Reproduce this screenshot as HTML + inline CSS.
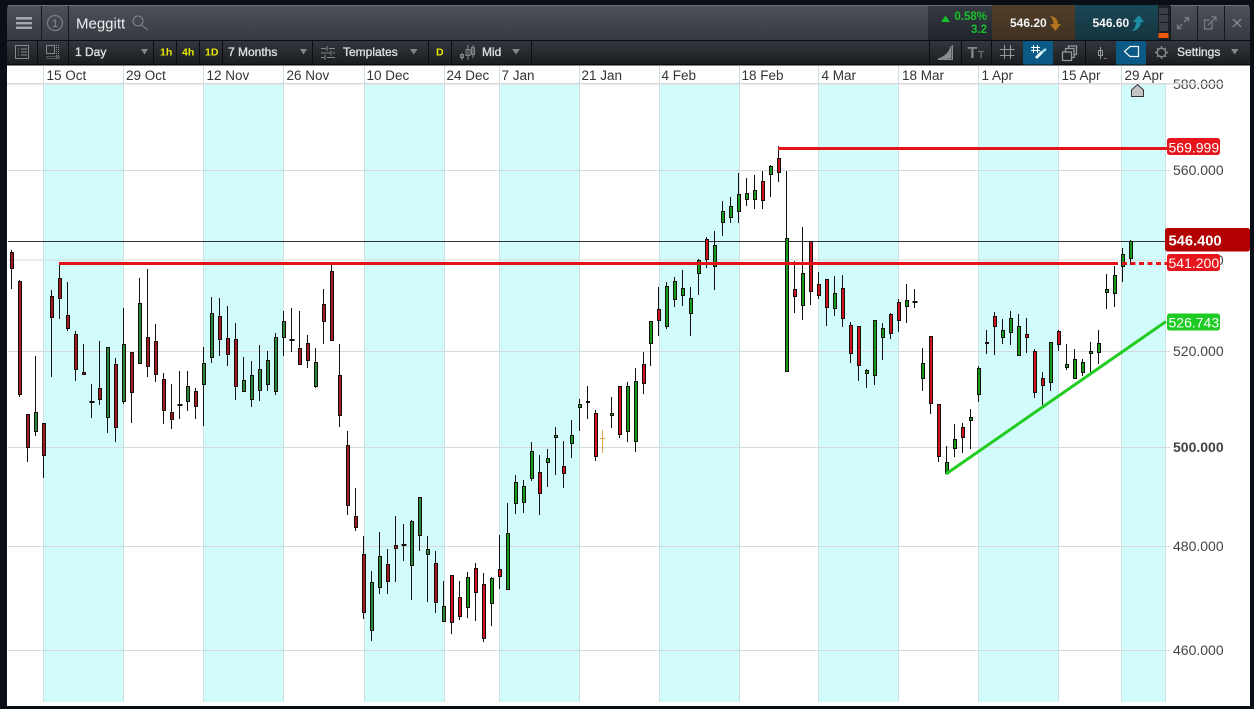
<!DOCTYPE html>
<html lang="en"><head><meta charset="utf-8"><title>Meggitt</title>
<style>
html,body{margin:0;padding:0;background:#0a0f16;width:1254px;height:709px;overflow:hidden}
svg{display:block;position:absolute;left:0;top:0}
text{font-family:"Liberation Sans",sans-serif}
.d{font-size:13.5px;fill:#333}
.a{font-size:14px;fill:#444}
.t{font-size:12px;fill:#dcdee2;stroke:#dcdee2;stroke-width:.35px}
.y{font-size:10.5px;font-weight:bold;fill:#e8e800}
.l{font-size:14px;fill:#fff}
.s{stroke:#15100f;stroke-width:1}
.i{fill:none;stroke:#85888d;stroke-width:1}
</style></head><body>
<svg width="1254" height="709" viewBox="0 0 1254 709" xmlns="http://www.w3.org/2000/svg">
<defs>
<linearGradient id="g1" x1="0" y1="0" x2="0" y2="1"><stop offset="0" stop-color="#4d5159"/><stop offset="1" stop-color="#25282e"/></linearGradient>
<linearGradient id="g2" x1="0" y1="0" x2="0" y2="1"><stop offset="0" stop-color="#33363c"/><stop offset="1" stop-color="#1a1c21"/></linearGradient>
<linearGradient id="g3" x1="0" y1="0" x2="0" y2="1"><stop offset="0" stop-color="#353942"/><stop offset="1" stop-color="#22252c"/></linearGradient>
<linearGradient id="g4" x1="0" y1="0" x2="0" y2="1"><stop offset="0" stop-color="#523f29"/><stop offset="1" stop-color="#403122"/></linearGradient>
<linearGradient id="g5" x1="0" y1="0" x2="0" y2="1"><stop offset="0" stop-color="#1a4655"/><stop offset="1" stop-color="#153540"/></linearGradient>
</defs>
<rect width="1254" height="709" fill="#0a0f16"/>
<!-- title bar -->
<rect x="7" y="5" width="1243" height="60" rx="4" fill="url(#g1)"/>
<rect x="8" y="5" width="1241" height="1" fill="#6c6f75"/>
<rect x="7" y="40" width="1243" height="1" fill="#0c0d10"/>
<rect x="7" y="41" width="1243" height="24" fill="url(#g2)"/>
<rect x="7" y="64" width="1243" height="1.5" fill="#08090b"/>
<g fill="#a5a8ac"><rect x="16" y="17" width="16" height="2.6"/><rect x="16" y="22" width="16" height="2.4"/><rect x="16" y="26.6" width="16" height="2.4"/></g>
<path d="M41.5 6V40M68.5 6V40" stroke="#17181c"/>
<circle cx="55" cy="23" r="7.5" fill="none" stroke="#7c7f84" stroke-width="1.2"/>
<text x="55" y="27" text-anchor="middle" font-size="11" fill="#8a8d92">1</text>
<text x="76" y="28.5" font-size="15" fill="#eceef0">Meggitt</text>
<circle cx="138" cy="21" r="5" class="i" stroke-width="1.2"/><path d="M141.5 25L148 30" class="i" stroke-width="1.4"/>
<!-- quote -->
<rect x="928" y="6" width="64" height="34" fill="url(#g3)"/>
<rect x="992" y="5" width="83" height="35" fill="url(#g4)"/>
<rect x="1075" y="5" width="83" height="35" fill="url(#g5)"/>
<rect x="1158" y="5" width="12" height="35" fill="#1d2024"/>
<g fill="#3a3e44"><rect x="1159" y="8" width="9" height="6"/><rect x="1159" y="15" width="9" height="7"/><rect x="1159" y="23" width="9" height="8"/></g>
<rect x="1158.5" y="33" width="10" height="5" fill="#f05a10"/>
<path d="M1170.5 6V40M1197.5 6V40M1224.5 6V40" stroke="#17181c"/>
<path d="M945.5 15.5L950 22H941Z" fill="#18c02c"/>
<text x="987" y="20" text-anchor="end" font-size="11.5" font-weight="bold" fill="#18c02c">0.58%</text>
<text x="987" y="33" text-anchor="end" font-size="11.5" font-weight="bold" fill="#18c02c">3.2</text>
<text x="1010" y="27" font-size="12" font-weight="bold" fill="#f4f4f4">546.20</text>
<path d="M1050 16C1054 16 1058 19 1058 24L1061 24L1055.5 31L1050 24.5L1053.5 24C1053.5 21 1052 18 1050 16Z" fill="#b0731e"/>
<text x="1092.5" y="27" font-size="12" font-weight="bold" fill="#f4f4f4">546.60</text>
<path d="M1132 31C1135 28 1136 25 1136 22L1133 22L1139 15L1144 22L1141 22C1141 26 1137 31 1132 31Z" fill="#1c8ea2"/>
<path d="M1177.5 28.5L1182 24M1177.5 24.5V28.5H1181.5M1188.5 17.5L1184 22M1184.5 17.5H1188.5V21.5" fill="none" stroke="#7a7d82" stroke-width="1.3"/>
<path d="M1212 20.5V29H1204.5V20H1210M1208 25L1216 17M1211.5 17H1216V21.5" fill="none" stroke="#7a7d82" stroke-width="1.2"/>
<path d="M1233 19L1241 27M1241 19L1233 27" stroke="#85888d" stroke-width="1.4"/>
<!-- toolbar -->
<path d="M37.5 41V64M68.5 41V64M153.5 41V64M176.5 41V64M199.5 41V64M222.5 41V64M312.5 41V64M428.5 41V64M451.5 41V64M531.5 41V64M929.5 41V64M961.5 41V64M991.5 41V64M1085.5 41V64" stroke="#0d0e11"/>
<rect x="15.5" y="45.5" width="13" height="13" class="i"/><path d="M18 49h1M21 49h6M18 52h1M21 52h6M18 55h1M21 55h6" class="i"/>
<rect x="46.5" y="45.5" width="8" height="8" class="i"/><path d="M46.5 56.5H60M46.5 58.5H60M56.5 45V59M58.5 45V59" class="i" stroke-dasharray="1 1"/>
<text x="75" y="56" class="t">1 Day</text>
<path d="M141 49H148L144.500 54.500Z" fill="#82858a"/>
<text x="160" y="55.500" class="y">1h</text><text x="182" y="55.500" class="y">4h</text><text x="205" y="55.500" class="y">1D</text>
<text x="228" y="56" class="t">7 Months</text>
<path d="M300 49H307L303.500 54.500Z" fill="#82858a"/>
<path d="M321 48.500H326M329 48.500H335M321 53H330M333 53H335M321 57.500H324M327 57.500H335M327 46V51M331 50.500V55.500M325 55V60" class="i"/>
<text x="343" y="56" class="t">Templates</text>
<path d="M410 49H417.500L413.700 54.500Z" fill="#82858a"/>
<text x="436" y="55.500" class="y">D</text>
<path d="M462 53V60M468 45V60M473 45V58" class="i" stroke="#777"/><rect x="460.500" y="54.500" width="3" height="3" class="i" fill="#25272c"/><rect x="466" y="49.500" width="4" height="6" class="i" fill="#25272c"/><rect x="471.500" y="47.500" width="3" height="7" class="i" fill="#25272c"/>
<text x="482" y="56" class="t">Mid</text>
<path d="M512 49H520L516 54.500Z" fill="#82858a"/>
<path d="M938 59.500H952.500V45M938 59C945 57 950 52 951 46V58Z" fill="none" stroke="#8a8d92"/><path d="M940 58C946 56 949 52 951 47V58Z" fill="#8a8d92"/>
<text x="967.500" y="58" font-size="16" fill="#85888d" font-weight="bold">T</text><text x="978" y="58" font-size="10" fill="#85888d">T</text>
<path d="M1004.500 45V59M1010.500 45V59M1000 49.500H1014.500M1000 55.500H1014.500" stroke="#95989c" fill="none"/>
<rect x="1023" y="41" width="30" height="23.500" fill="#0b5a86"/>
<path d="M1033.500 45V53M1037.500 45V53M1031 47.500H1040M1031 50.500H1040" stroke="#fff" fill="none"/>
<path d="M1036 58L1042 52" stroke="#e8f4f8" stroke-width="3"/><path d="M1042 52L1046 49" stroke="#9fd8e8" stroke-width="2.500"/>
<path d="M1062.500 50.500H1071.500V59H1062.500ZM1065.500 50V47H1074V56H1072M1068.500 47V44.500H1076.500V53H1074" fill="none" stroke="#95989c" stroke-width="1.300" transform="translate(0,1.500)"/>
<path d="M1100.500 47V59" stroke="#95989c"/><rect x="1098.500" y="50.500" width="4" height="5" fill="none" stroke="#95989c"/><path d="M1104 58.500H1107" stroke="#777"/>
<rect x="1116" y="41" width="30" height="23.500" fill="#0b5a86"/>
<path d="M1124.500 51.500L1130 46.500H1138.500V56.500H1130Z" fill="none" stroke="#f2f6f8" stroke-width="1.200"/>
<circle cx="1161.500" cy="52.500" r="4.300" fill="none" stroke="#85888d" stroke-width="1.500"/><path d="M1161.500 46V48.500M1161.500 56.500V59M1155 52.500H1157.500M1165.500 52.500H1168M1157 48L1158.500 49.500M1164.500 55.500L1166 57M1166 48L1164.500 49.500M1158.500 55.500L1157 57" stroke="#85888d" stroke-width="1.400"/>
<text x="1177" y="56" class="t">Settings</text>
<path d="M1231 49H1238.500L1234.700 54.500Z" fill="#82858a"/>
<!-- chart -->
<rect x="7" y="65.500" width="1243" height="640.500" fill="#fff"/>
<g fill="#d2fbfc">
<rect x="43" y="84" width="80" height="618"/><rect x="203" y="84" width="80" height="618"/><rect x="364" y="84" width="80" height="618"/><rect x="499" y="84" width="80" height="618"/><rect x="659" y="84" width="80" height="618"/><rect x="818" y="84" width="80" height="618"/><rect x="978" y="84" width="80" height="618"/><rect x="1121" y="84" width="44" height="618"/>
</g>
<path d="M8 170.500H1170M8 260H1170M8 351.500H1170M8 447.500H1170M8 546.500H1170M8 650.500H1170" stroke="#d5d9da"/>
<path d="M43.500 66V702M123.500 66V702M203.500 66V702M283.500 66V702M364.500 66V702M444.500 66V702M499.500 66V702M579.500 66V702M659.500 66V702M739.500 66V702M818.500 66V702M898.500 66V702M978.500 66V702M1058.500 66V702M1121.500 66V702M1165.500 84V702" stroke="#cfe0e3"/>
<g>
<text class="d" x="46.500" y="80">15 Oct</text><text class="d" x="126" y="80">29 Oct</text><text class="d" x="206.500" y="80">12 Nov</text><text class="d" x="286.500" y="80">26 Nov</text><text class="d" x="366.500" y="80">10 Dec</text><text class="d" x="446.500" y="80">24 Dec</text><text class="d" x="501.500" y="80">7 Jan</text><text class="d" x="581.500" y="80">21 Jan</text><text class="d" x="661.500" y="80">4 Feb</text><text class="d" x="741.500" y="80">18 Feb</text><text class="d" x="821.500" y="80">4 Mar</text><text class="d" x="902" y="80">18 Mar</text><text class="d" x="981.500" y="80">1 Apr</text><text class="d" x="1061.500" y="80">15 Apr</text><text class="d" x="1124.500" y="80">29 Apr</text>
</g>
<text class="a" x="1173" y="89">580.000</text>
<rect x="7" y="83" width="1216" height="1.500" fill="#d9d9d9"/>
<text class="a" x="1173" y="175">560.000</text>
<text class="a" x="1173" y="265">540.000</text>
<text class="a" x="1173" y="356">520.000</text>
<text class="a" x="1173" y="452" font-weight="bold" fill="#222">500.000</text>
<text class="a" x="1173" y="551">480.000</text>
<text class="a" x="1173" y="655">460.000</text>
<path d="M1131.500 96.500V90L1137.500 84.500L1143.500 90V96.500Z" fill="#c4c4c4" stroke="#333"/>
<path d="M8 241.500H1166" stroke="#333"/>
<!-- wicks -->
<path fill="none" stroke="#15100f" d="M11.500 250V289M19.500 280V397M27.500 414V462M35.500 356V436M43.500 423V478M51.500 290V377M59.500 263V319M67.500 282V331M75.500 331V381M83.500 344V375M91.500 384V418M99.500 341V405M107.500 347V433M115.500 358V442M123.500 308V404M131.500 352V423M139.500 278V364M147.500 269V377M155.500 324V382M163.500 373V424M171.500 384V429M179.500 371V419M187.500 371V411M195.500 388V419M203.500 347V426M211.500 297V363M219.500 298V356M227.500 306V366M235.500 323V400M243.500 357V392M251.500 361V407M259.500 345V401M267.500 351V391M275.500 333V395M283.500 311V356M291.500 308V352M299.500 311V365M307.500 335V368M315.500 348V388M323.500 289V344M331.500 265V341M339.500 344V427M347.500 431V515M355.500 488V531M363.500 536V619M371.500 571V641M379.500 532V594M387.500 549V594M395.500 516V582M403.500 524V561M411.500 520V600M419.500 497V551M427.500 536V602M435.500 551V613M443.500 581V622M451.500 575V634M459.500 581V620M467.500 572V618M475.500 563V621M483.500 573V642M491.500 577V626M499.500 535V589M507.500 503V590M515.500 475V514M523.500 480V513M531.500 442V481M539.500 455V515M547.500 449V487M555.500 427V475M563.500 441V488M571.500 420V458M579.500 399V431M587.500 386V419M595.500 410V461M611.500 397V428M619.500 386V438M627.500 382V442M635.500 368V452M643.500 352V394M650.500 321V366M658.500 287V336M666.500 282V329M674.500 277V307M682.500 270V306M690.500 287V336M698.500 259V295M706.500 237V268M714.500 231V290M722.500 201V236M730.500 197V223M738.500 173V223M746.500 178V206M754.500 175V209M762.500 171V209M770.500 165V197M778.500 146V182M786.500 171V372M794.500 261V313M802.500 227V320M810.500 241V305M818.500 272V299M826.500 279V326M834.500 276V316M842.500 275V327M850.500 322V363M858.500 326V381M866.500 369V388M874.500 320V385M882.500 323V360M890.500 313V339M898.500 299V332M906.500 284V323M914.500 289V308M922.500 348V391M930.500 336V414M938.500 404V462M946.500 446V474M954.500 424V457M962.500 423V453M970.500 409V449M978.500 366V402M986.500 330V354M994.500 312V355M1002.500 319V344M1010.500 311V345M1018.500 314V356M1026.500 318V353M1034.500 349V398M1042.500 372V405M1050.500 342V391M1058.500 330V351M1066.500 344V370M1074.500 349V379M1082.500 359V376M1090.500 342V375M1098.500 330V364M1106.500 274V309M1114.500 266V307M1122.500 248V282M1130.500 240V265"/>
<path stroke="#15100f" stroke-width="2" d="M89.500 402H94.500M177.500 405H182.500M289.500 340H294.500M401.500 545H406.500M912.500 302H917.500"/>
<path stroke="#e0a445" fill="none" d="M602.500 430V453M600 438.500H605"/>
<!-- dark red bodies -->
<path class="s" fill="#a21a20" d="M10.500 252.500h3v16h-3zM18.500 281.500h3v113h-3zM26.500 414.500h3v33h-3zM42.500 423.500h3v32h-3zM50.500 296.500h3v21h-3zM58.500 278.500h3v20h-3zM66.500 315.500h3v13h-3zM74.500 334.500h3v35h-3zM82.500 372.500h3v2h-3zM98.500 388.500h3v11h-3zM114.500 364.500h3v63h-3zM130.500 352.500h3v40h-3zM146.500 337.500h3v29h-3zM154.500 341.500h3v33h-3zM162.500 379.500h3v31h-3zM170.500 412.500h3v7h-3zM194.500 391.500h3v15h-3zM218.500 316.500h3v23h-3zM226.500 338.500h3v16h-3zM234.500 339.500h3v47h-3zM298.500 348.500h3v16h-3zM306.500 343.500h3v17h-3zM322.500 304.500h3v17h-3zM330.500 271.500h3v69h-3zM338.500 375.500h3v40h-3zM346.500 445.500h3v60h-3zM354.500 516.500h3v11h-3zM362.500 554.500h3v58h-3zM386.500 564.500h3v17h-3zM394.500 545.500h3v3h-3zM434.500 563.500h3v39h-3z"/>
<!-- bright red bodies -->
<path class="s" fill="#d0121c" d="M450.500 575.500h3v47h-3zM458.500 597.500h3v19h-3zM474.500 568.500h3v24h-3zM482.500 584.500h3v54h-3zM498.500 569.500h3v7h-3zM538.500 472.500h3v21h-3zM562.500 466.500h3v7h-3zM594.500 413.500h3v43h-3zM618.500 386.500h3v48h-3zM642.500 364.500h3v19h-3zM657.500 309.500h3v11h-3zM705.500 239.500h3v20h-3zM761.500 181.500h3v19h-3zM777.500 158.500h3v14h-3zM793.500 289.500h3v7h-3zM809.500 241.500h3v50h-3zM817.500 284.500h3v11h-3zM825.500 279.500h3v28h-3zM841.500 288.500h3v30h-3zM849.500 325.500h3v28h-3zM857.500 326.500h3v39h-3zM889.500 314.500h3v19h-3zM897.500 302.500h3v18h-3zM929.500 336.500h3v67h-3zM937.500 404.500h3v52h-3zM961.500 427.500h3v10h-3zM993.500 316.500h3v10h-3zM1025.500 334.500h3v3h-3zM1033.500 351.500h3v41h-3zM1041.500 378.500h3v7h-3zM1057.500 331.500h3v13h-3z"/>
<!-- dark green bodies -->
<path class="s" fill="#2a8436" d="M34.500 412.500h3v19h-3zM106.500 347.500h3v70h-3zM122.500 344.500h3v57h-3zM138.500 303.500h3v60h-3zM186.500 386.500h3v15h-3zM202.500 363.500h3v21h-3zM210.500 313.500h3v44h-3zM242.500 380.500h3v11h-3zM250.500 375.500h3v24h-3zM258.500 369.500h3v21h-3zM266.500 360.500h3v24h-3zM274.500 337.500h3v54h-3zM282.500 321.500h3v16h-3zM314.500 362.500h3v24h-3zM370.500 582.500h3v48h-3zM378.500 556.500h3v31h-3zM410.500 521.500h3v44h-3zM418.500 497.500h3v38h-3zM426.500 549.500h3v5h-3zM442.500 606.500h3v15h-3z"/>
<!-- bright green bodies -->
<path class="s" fill="#149a18" d="M466.500 577.500h3v30h-3zM490.500 578.500h3v25h-3zM506.500 533.500h3v56h-3zM514.500 482.500h3v21h-3zM522.500 486.500h3v16h-3zM530.500 451.500h3v27h-3zM546.500 458.500h3v4h-3zM554.500 435.500h3v2h-3zM570.500 435.500h3v8h-3zM578.500 404.500h3v3h-3zM586.500 401.500h3v1h-3zM610.500 413.500h3v2h-3zM626.500 386.500h3v45h-3zM634.500 381.500h3v60h-3zM649.500 321.500h3v22h-3zM665.500 286.500h3v40h-3zM673.500 281.500h3v18h-3zM681.500 288.500h3v7h-3zM689.500 298.500h3v15h-3zM697.500 260.500h3v13h-3zM713.500 245.500h3v21h-3zM721.500 211.500h3v11h-3zM729.500 206.500h3v11h-3zM737.500 194.500h3v17h-3zM745.500 193.500h3v6h-3zM753.500 190.500h3v9h-3zM769.500 166.500h3v8h-3zM785.500 238.500h3v133h-3zM801.500 273.500h3v32h-3zM833.500 293.500h3v15h-3zM865.500 370.500h3v3h-3zM873.500 320.500h3v55h-3zM881.500 328.500h3v9h-3zM905.500 300.500h3v6h-3zM921.500 363.500h3v15h-3zM945.500 462.500h3v11h-3zM953.500 439.500h3v9h-3zM969.500 417.500h3v3h-3zM977.500 368.500h3v26h-3zM985.500 342.500h3v1h-3zM1001.500 330.500h3v7h-3zM1009.500 318.500h3v14h-3zM1017.500 326.500h3v29h-3zM1049.500 342.500h3v40h-3zM1065.500 364.500h3v3h-3zM1073.500 359.500h3v19h-3zM1081.500 362.500h3v10h-3zM1089.500 351.500h3v2h-3zM1097.500 343.500h3v9h-3zM1105.500 289.500h3v3h-3zM1113.500 275.500h3v18h-3zM1121.500 254.500h3v12h-3zM1129.500 241.500h3v17h-3z"/>
<!-- trend lines -->
<path d="M59 263.500H1118" stroke="#e4131a" stroke-width="3"/>
<path d="M1122 263.500H1167" stroke="#e4131a" stroke-width="3" stroke-dasharray="5 3.500"/>
<path d="M778 148.500H1167" stroke="#e4131a" stroke-width="3"/>
<path d="M946 474L1166 321.500" stroke="#22cc22" stroke-width="3"/>
<!-- price labels -->
<rect x="1167" y="138" width="53" height="17" rx="2.500" fill="#e6161c"/>
<text class="l" x="1168.500" y="152.500">569.999</text>
<rect x="1165" y="228" width="85" height="23.500" rx="2.500" fill="#b30000"/>
<text x="1168.500" y="245.500" font-size="14.700" font-weight="bold" fill="#fff">546.400</text>
<rect x="1167" y="254" width="53" height="17" rx="2.500" fill="#e6161c"/>
<text class="l" x="1168.500" y="268">541.200</text>
<rect x="1167" y="313.500" width="53" height="17" rx="2.500" fill="#1ecb22"/>
<text class="l" x="1168.500" y="327.500" fill="#ecfbe8">526.743</text>
</svg>
</body></html>
